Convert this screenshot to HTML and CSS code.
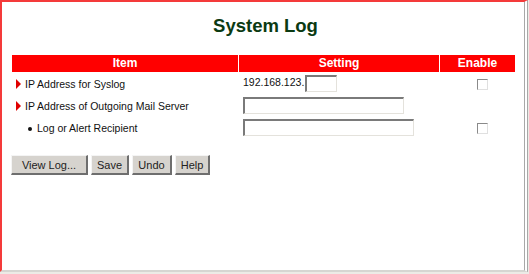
FILE: index.html
```html
<!DOCTYPE html>
<html>
<head>
<meta charset="utf-8">
<link rel="stylesheet" href="styles.css">
</head>
<body>
<div class="frame">
  <h1 class="title">System Log</h1>
  <table class="grid">
    <colgroup>
      <col class="c-item"><col class="c-set"><col class="c-en">
    </colgroup>
    <tr class="head">
      <th>Item</th><th>Setting</th><th>Enable</th>
    </tr>
    <tr class="row">
      <td class="item"><span class="tri"></span>IP Address for Syslog</td>
      <td class="set">192.168.123.<span class="input w-ip"></span></td>
      <td class="en"><span class="chk"></span></td>
    </tr>
    <tr class="row">
      <td class="item"><span class="tri"></span>IP Address of Outgoing Mail Server</td>
      <td class="set"><span class="input w-mail"></span></td>
      <td class="en"></td>
    </tr>
    <tr class="row">
      <td class="item sub"><span class="dot"></span>Log or Alert Recipient</td>
      <td class="set"><span class="input w-rcpt"></span></td>
      <td class="en"><span class="chk"></span></td>
    </tr>
  </table>
  <div class="buttons">
    <button class="btn w-view">View Log...</button>
    <button class="btn w-save">Save</button>
    <button class="btn w-undo">Undo</button>
    <button class="btn w-help">Help</button>
  </div>
</div>
</body>
</html>
```
FILE: styles.css
```css
html, body {
  margin: 0;
  padding: 0;
  background: #ecebe6;
  font-family: "Liberation Sans", Arial, sans-serif;
}
.frame {
  box-sizing: border-box;
  width: 528px;
  height: 272px;
  background: #fff;
  border-top: 2px solid #f43a3a;
  border-left: 2px solid #f43a3a;
  border-right: 4px double #a8a8a8;
  border-bottom: 2px solid #d6d6d2;
  padding: 0 0 0 9px;
}
.title {
  margin: 0;
  padding: 14px 4px 0 0;
  height: 41px;
  box-sizing: border-box;
  text-align: center;
  font-size: 18.5px;
  line-height: 20px;
  font-weight: bold;
  color: #0b3a12;
}
.grid {
  border-collapse: separate;
  border-spacing: 1px;
  table-layout: fixed;
  width: 504px;
  margin-top: 11px;
}
.c-item { width: 226px; }
.c-set { width: 200px; }
.c-en { width: 75px; }
.head th {
  background: #ff0000;
  color: #fff;
  font-size: 12px;
  font-weight: bold;
  height: 17px;
  padding: 0;
  line-height: 17px;
}
.row td {
  height: 21px;
  padding: 0;
  font-size: 10.5px;
  color: #111;
  white-space: nowrap;
  vertical-align: middle;
}
.item { padding-left: 4px !important; }
.item.sub { padding-left: 16px !important; }
.tri {
  display: inline-block;
  width: 0;
  height: 0;
  border-top: 5px solid transparent;
  border-bottom: 5px solid transparent;
  border-left: 5px solid #e00000;
  margin-right: 4px;
  vertical-align: -1px;
}
.dot {
  display: inline-block;
  width: 4px;
  height: 4px;
  border-radius: 50%;
  background: #111;
  margin-right: 5px;
  vertical-align: 1px;
}
.set { padding-left: 4px !important; }
.input {
  display: inline-block;
  box-sizing: border-box;
  height: 17px;
  vertical-align: middle;
  background: #fff;
  border-top: 2px solid #7a7a7a;
  border-left: 2px solid #7a7a7a;
  border-bottom: 1px solid #e4e2dc;
  border-right: 1px solid #e4e2dc;
}
.w-ip { width: 32px; margin-left: 1px; }
.w-mail { width: 161px; }
.w-rcpt { width: 171px; }
.en { text-align: center; }
.chk {
  display: inline-block;
  box-sizing: border-box;
  width: 11px;
  height: 11px;
  margin-left: 10px;
  vertical-align: middle;
  border-top: 1px solid #8a8a8a;
  border-left: 1px solid #8a8a8a;
  border-bottom: 1px solid #e0e0e0;
  border-right: 1px solid #e0e0e0;
  background: #fff;
}
.buttons {
  display: flex;
  gap: 3px;
  margin-top: 16px;
}
.btn {
  box-sizing: border-box;
  height: 20px;
  padding: 0;
  font-family: "Liberation Sans", Arial, sans-serif;
  font-size: 11px;
  color: #222;
  background: #d6d3ce;
  border-top: 1px solid #f4f4f4;
  border-left: 1px solid #f4f4f4;
  border-right: 2px solid #6e6e6e;
  border-bottom: 2px solid #6e6e6e;
}
.w-view { width: 77px; }
.w-save { width: 38px; }
.w-undo { width: 40px; }
.w-help { width: 35px; }
```
